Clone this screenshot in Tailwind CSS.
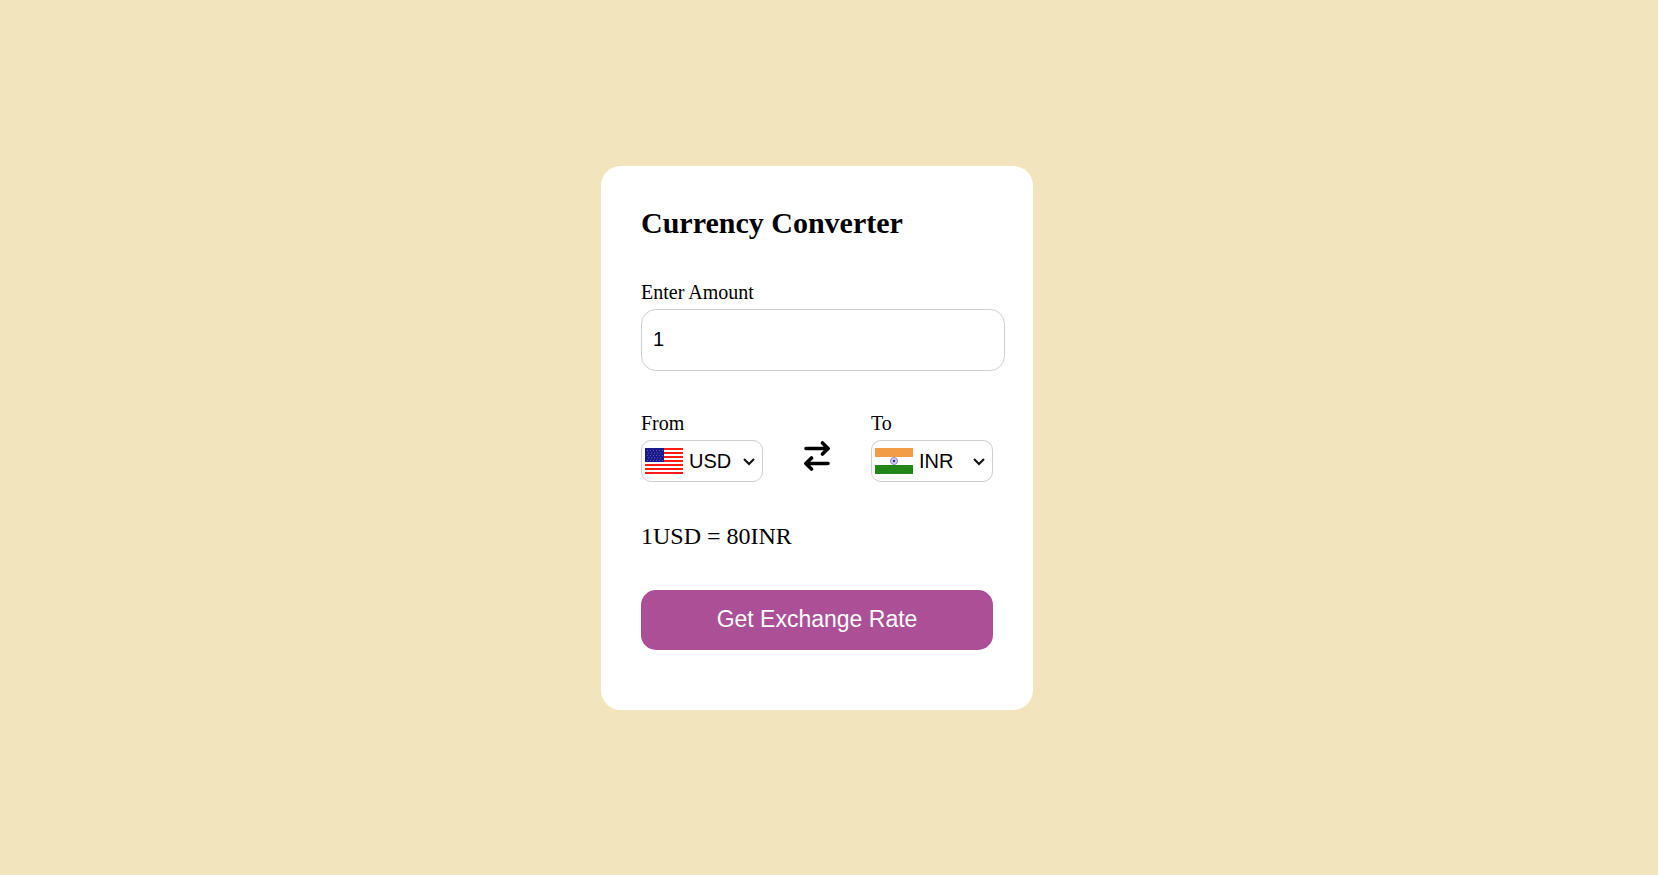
<!DOCTYPE html>
<html lang="en">
<head>
    <meta charset="UTF-8">
    <meta name="viewport" content="width=device-width, initial-scale=1.0">
    <title>Currency Converter</title>
    <script src="https://cdn.jsdelivr.net/npm/@tailwindcss/browser@4"></script>
</head>
<body class="bg-[#f2e4bc] min-h-screen flex items-center justify-center pr-6 text-black font-['Liberation_Serif','Times_New_Roman',serif]">
<main class="bg-white rounded-[20px] p-10 pb-[60px] w-full max-w-[432px]">
    <h1 class="text-[30px] leading-[34px] font-bold">Currency Converter</h1>
    <form>
        <!-- Amount -->
        <div class="mt-10">
            <label for="amount" class="block text-xl leading-6 mb-[5px]">Enter Amount</label>
            <input type="text" id="amount" value="1"
                   class="block w-[364px] h-[62px] px-[11px] text-xl border border-[#ccced4] rounded-[15px] font-['Liberation_Sans',Arial,sans-serif]">
        </div>

        <!-- From / To -->
        <div class="mt-10 flex items-center justify-between">
            <div>
                <label for="from" class="block text-xl leading-6 mb-[5px]">From</label>
                <div class="flex items-center w-[122px] h-[42px] px-[3px] border border-[#ccced4] rounded-[10px]">
                    <svg class="w-[38px] h-[26px] shrink-0" viewBox="0 0 38 26" aria-hidden="true">
                        <rect width="38" height="26" fill="#fff"/>
                        <path d="M0 1h38M0 5h38M0 9h38M0 13h38M0 17h38M0 21h38M0 25h38" stroke="#ff1a1a" stroke-width="2"/>
                        <rect width="19" height="14" fill="#1a1a8c"/>
                        <path d="M2 2.5h16M3 5h14M2 7.5h16M3 10h14M2 12.5h16" stroke="#5a62b0" stroke-width="1" stroke-dasharray="1 2"/>
                    </svg>
                    <select id="from" class="appearance-none grow min-w-0 ml-1.5 -mr-4 h-8 text-xl font-['Liberation_Sans',Arial,sans-serif]">
                        <option selected>USD</option>
                        <option>INR</option>
                    </select>
                    <svg class="w-3 h-2 mr-1 mt-0.5 shrink-0 pointer-events-none" viewBox="0 0 12 8" fill="none" stroke="#101010" stroke-width="2" aria-hidden="true">
                        <path d="M1 1l5 5 5-5"/>
                    </svg>
                </div>
            </div>

            <button type="button" aria-label="Swap currencies" class="mt-5">
                <svg class="w-[26px] h-8" viewBox="0 0 26 32" fill="none" stroke="#000" stroke-width="3.6" stroke-linecap="round" stroke-linejoin="round" aria-hidden="true">
                    <path d="M2 8.5h22M18.5 3l5.6 5.5-5.6 5.5"/>
                    <path d="M24 23.5H2M7.500 18l-5.600 5.500 5.600 5.500"/>
                </svg>
            </button>

            <div>
                <label for="to" class="block text-xl leading-6 mb-[5px]">To</label>
                <div class="flex items-center w-[122px] h-[42px] px-[3px] border border-[#ccced4] rounded-[10px]">
                    <svg class="w-[38px] h-[26px] shrink-0" viewBox="0 0 38 26" aria-hidden="true">
                        <rect width="38" height="26" fill="#fff"/>
                        <rect width="38" height="9" fill="#f39c47"/>
                        <rect y="17" width="38" height="9" fill="#228618"/>
                        <circle cx="19" cy="13" r="3.5" fill="#d6d2ec" stroke="#8d86c4"/>
                        <circle cx="19" cy="13" r="1.3" fill="#3a33a0"/>
                    </svg>
                    <select id="to" class="appearance-none grow min-w-0 ml-1.5 -mr-4 h-8 text-xl font-['Liberation_Sans',Arial,sans-serif]">
                        <option>USD</option>
                        <option selected>INR</option>
                    </select>
                    <svg class="w-3 h-2 mr-1 mt-0.5 shrink-0 pointer-events-none" viewBox="0 0 12 8" fill="none" stroke="#101010" stroke-width="2" aria-hidden="true">
                        <path d="M1 1l5 5 5-5"/>
                    </svg>
                </div>
            </div>
        </div>

        <p class="mt-10 text-2xl leading-7">1USD = 80INR</p>

        <button type="submit" class="mt-10 w-full h-[60px] rounded-[15px] bg-[#ab4f96] text-white text-[23px] font-['Liberation_Sans',Arial,sans-serif]">Get Exchange Rate</button>
    </form>
</main>
</body>
</html>
